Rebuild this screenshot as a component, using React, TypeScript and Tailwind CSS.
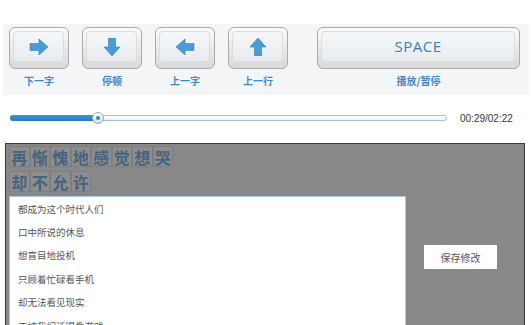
import React from "react";

const cjk = "font-['Noto_Sans_CJK_SC','Noto_Sans',sans-serif]";

// arrow drawn pointing right, rotated for the other directions
const Arrow = ({ rotate }: { rotate: number }) => (
  <svg width="20" height="18" viewBox="0 0 20 18">
    <g transform={`rotate(${rotate} 10 9)`}>
      <polygon points="1,5.5 10,5.5 10,1 19,9 10,17 10,12.5 1,12.5" fill="#4a9bd8" stroke="#2f7fbf" strokeWidth="0.6" />
    </g>
  </svg>
);

const keys = [
  { label: "下一字", rotate: 0 },
  { label: "停顿", rotate: 90 },
  { label: "上一字", rotate: 180 },
  { label: "上一行", rotate: 270 },
];

const lyrics = ["再惭愧地感觉想哭", "却不允许"];

const items = [
  "都成为这个时代人们",
  "口中所说的休息",
  "想盲目地投机",
  "只顾着忙碌看手机",
  "却无法看见现实",
  "正被我们活得像游戏",
];

const KeyFace = ({ className, children }: { className: string; children: React.ReactNode }) => (
  <div
    className={`${className} h-[42px] rounded-[6px] border border-[#ababab] bg-gradient-to-b from-[#fbfbfb] to-[#d9d9d9] p-[3px] pb-[6px] pr-[4px]`}
  >
    <div className="w-full h-full rounded-[4px] bg-gradient-to-b from-[#f5f7f9] to-[#e8ecef] border border-[#dcdcdc] flex items-center justify-center">
      {children}
    </div>
  </div>
);

export default function App() {
  return (
    <div className={`w-[532px] h-[325px] overflow-hidden bg-white ${cjk}`}>
      {/* key bar */}
      <div className="mt-[24px] mx-[3px] h-[71px] bg-[#f4f5f6] flex items-start pl-[6px] pt-[3px]">
        <div className="flex gap-[13px]">
          {keys.map((k) => (
            <div key={k.label} className="flex flex-col items-center">
              <KeyFace className="w-[60px]">
                <Arrow rotate={k.rotate} />
              </KeyFace>
              <span className="mt-[5px] text-[10px] leading-[14px] font-bold text-[#3b8ad0]">{k.label}</span>
            </div>
          ))}
        </div>
        <div className="ml-[29px] flex flex-col items-center">
          <KeyFace className="w-[203px]">
            <span className="font-['Open_Sans',sans-serif] text-[15px] text-[#3a7fc0] tracking-[0.5px]">SPACE</span>
          </KeyFace>
          <span className="mt-[5px] text-[10px] leading-[14px] font-bold text-[#3b8ad0]">播放/暂停</span>
        </div>
      </div>

      {/* progress */}
      <div className="mt-[17px] h-[12px] flex items-center pl-[10px]">
        <div className="relative w-[437px] h-[6px] rounded-full border border-[#a9bfd3] bg-gradient-to-b from-white to-[#eef2f5]">
          <div className="absolute left-[-1px] top-[-1px] h-[6px] w-[88px] rounded-l-full bg-gradient-to-b from-[#3c98dc] to-[#1f7cc4]" />
          <div className="absolute left-[81px] top-[-4px] w-[12px] h-[12px] rounded-full border border-[#9aa6b0] bg-gradient-to-b from-white to-[#d9dee3] flex items-center justify-center">
            <div className="w-[4px] h-[4px] rounded-full bg-[#2b86cf]" />
          </div>
        </div>
        <span className="ml-[13px] font-['Liberation_Sans',sans-serif] text-[10px] text-[#333]">00:29/02:22</span>
      </div>

      {/* lyric editor */}
      <div className="mt-[19px] ml-[5px] w-[520px] h-[200px] border border-[#3a3a3a] bg-[#888888] pt-[2px] pl-[3px]">
        {lyrics.map((line) => (
          <div key={line} className="flex h-[25px] items-start">
            {line.split("").map((ch, i) => (
              <span
                key={i}
                className="w-[20.5px] h-[21px] flex items-center justify-center bg-[#8d8d8d] border border-[#7e7e7e] text-[16px] font-bold text-[#46637f]"
              >
                {ch}
              </span>
            ))}
          </div>
        ))}
        <div className="flex items-start">
          <div className="w-[397px] h-[150px] bg-white border border-[#a8cbe8] pl-[8px]">
            {items.map((t) => (
              <div key={t} className="h-[23.4px] flex items-center text-[9.5px] text-[#555]">
                {t}
              </div>
            ))}
          </div>
          <button className="ml-[18px] mt-[49px] w-[73px] h-[24px] bg-white text-[10px] text-[#555]">
            保存修改
          </button>
        </div>
      </div>
    </div>
  );
}
